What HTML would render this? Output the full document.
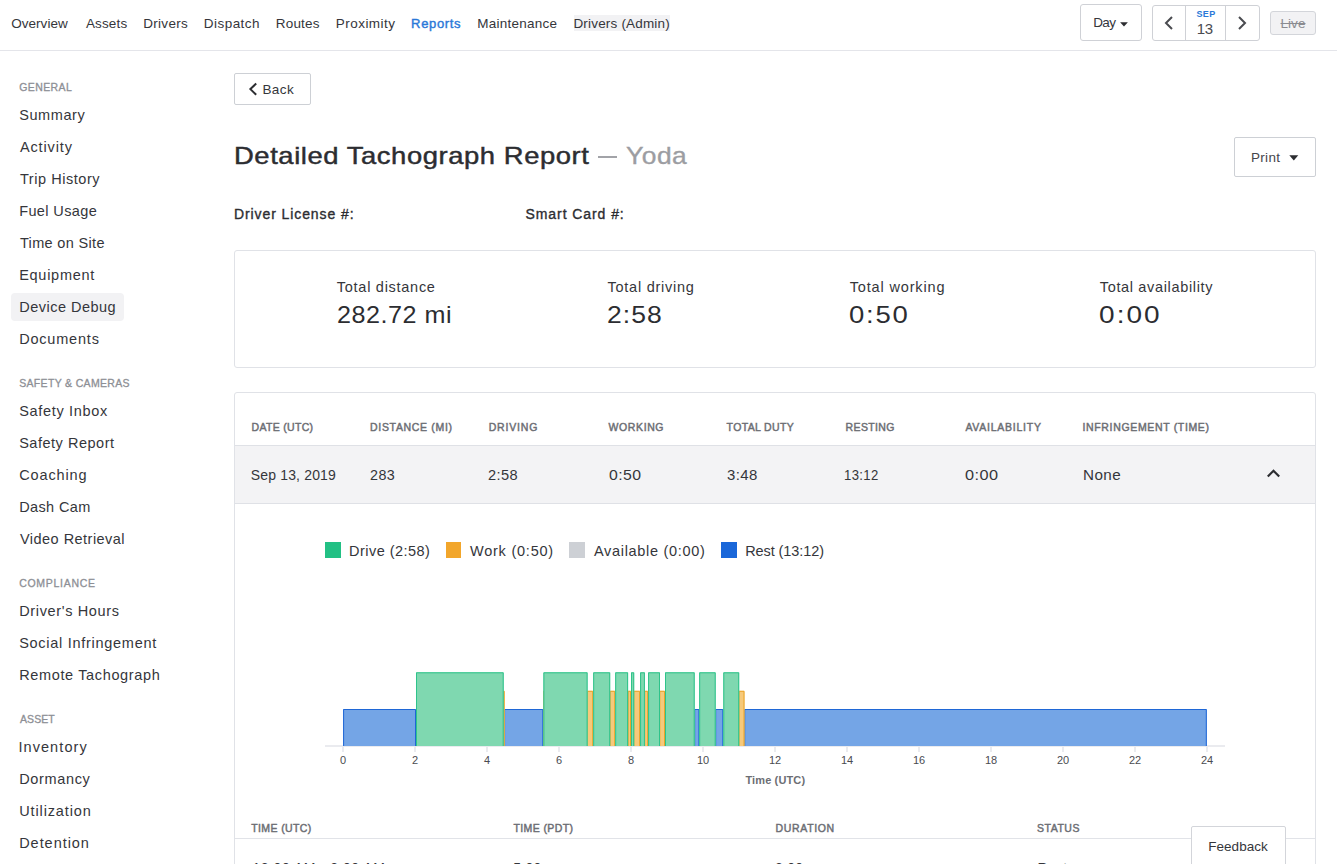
<!DOCTYPE html>
<html><head><meta charset="utf-8"><title>Detailed Tachograph Report</title>
<style>
html,body{margin:0;padding:0;background:#fff;}
body{width:1337px;height:864px;overflow:hidden;position:relative;font-family:"Liberation Sans",sans-serif;}
.t{position:absolute;white-space:nowrap;line-height:1;}
.r{position:absolute;}
</style></head><body>
<div class="r" style="left:0px;top:50px;width:1337px;height:1px;background:#e4e5ea;"></div>
<div class="r" style="left:574px;top:15px;width:96px;height:16px;background:#f2f2f4;"></div>
<div class="t" style="left:11.24px;top:16.57px;font-size:13.5px;color:#35363b;letter-spacing:0.029px;">Overview</div>
<div class="t" style="left:85.90px;top:16.57px;font-size:13.5px;color:#35363b;letter-spacing:0.152px;">Assets</div>
<div class="t" style="left:143.30px;top:16.57px;font-size:13.5px;color:#35363b;letter-spacing:0.275px;">Drivers</div>
<div class="t" style="left:203.82px;top:16.57px;font-size:13.5px;color:#35363b;letter-spacing:0.453px;">Dispatch</div>
<div class="t" style="left:275.82px;top:16.57px;font-size:13.5px;color:#35363b;letter-spacing:0.170px;">Routes</div>
<div class="t" style="left:335.82px;top:16.57px;font-size:13.5px;color:#35363b;letter-spacing:0.453px;">Proximity</div>
<div class="t" style="left:477.20px;top:16.57px;font-size:13.5px;color:#35363b;letter-spacing:0.260px;">Maintenance</div>
<div class="t" style="left:573.44px;top:16.57px;font-size:13.5px;color:#35363b;letter-spacing:0.182px;">Drivers (Admin)</div>
<div class="t" style="left:411.10px;top:16.99px;font-size:13px;color:#2a78d8;letter-spacing:0.650px;-webkit-text-stroke:0.4px #2a78d8;">Reports</div>
<div class="r" style="left:1080px;top:4px;width:62px;height:37px;border:1px solid #cfd1d6;border-radius:3px;box-sizing:border-box;background:#fff;"></div>
<div class="t" style="left:1093.20px;top:16.47px;font-size:13.5px;color:#35363b;letter-spacing:-0.625px;">Day</div>
<svg class="r" style="left:1120px;top:21.6px" width="9" height="6"><path d="M0.1 0.3 L7.9 0.3 L4 4.4 Z" fill="#2c2d31"/></svg>
<div class="r" style="left:1152px;top:5px;width:108px;height:36px;border:1px solid #cfd1d6;border-radius:3px;box-sizing:border-box;background:#fff;"></div>
<div class="r" style="left:1185px;top:5px;width:1px;height:36px;background:#cfd1d6;"></div>
<div class="r" style="left:1225px;top:5px;width:1px;height:36px;background:#cfd1d6;"></div>
<svg class="r" style="left:1162px;top:15px" width="13" height="16"><path d="M10 2 L4 8 L10 14" fill="none" stroke="#4a4b50" stroke-width="2"/></svg>
<svg class="r" style="left:1236px;top:15px" width="13" height="16"><path d="M3 2 L9 8 L3 14" fill="none" stroke="#4a4b50" stroke-width="2"/></svg>
<div class="t" style="left:1196.42px;top:9.58px;font-size:9px;color:#2a78d8;font-weight:700;letter-spacing:0.415px;">SEP</div>
<div class="t" style="left:1196.68px;top:21.30px;font-size:15px;color:#4a4b50;letter-spacing:-0.240px;">13</div>
<div class="r" style="left:1270px;top:11px;width:46px;height:24px;border:1px solid #d3d5da;border-radius:3px;box-sizing:border-box;background:#f2f2f4;"></div>
<div class="t" style="left:1280.50px;top:16.57px;font-size:13.5px;color:#8a8b90;letter-spacing:0.050px;text-decoration:line-through;">Live</div>
<div class="r" style="left:11px;top:293px;width:113px;height:28px;background:#f2f2f4;border-radius:4px;"></div>
<div class="t" style="left:19.18px;top:82.21px;font-size:10.5px;color:#8d8f95;letter-spacing:0.405px;-webkit-text-stroke:0.3px #8d8f95;">GENERAL</div>
<div class="t" style="left:19.18px;top:107.82px;font-size:14.5px;color:#35363b;letter-spacing:0.590px;">Summary</div>
<div class="t" style="left:19.98px;top:139.82px;font-size:14.5px;color:#35363b;letter-spacing:0.859px;">Activity</div>
<div class="t" style="left:19.98px;top:171.82px;font-size:14.5px;color:#35363b;letter-spacing:0.541px;">Trip History</div>
<div class="t" style="left:19.18px;top:203.82px;font-size:14.5px;color:#35363b;letter-spacing:0.380px;">Fuel Usage</div>
<div class="t" style="left:19.98px;top:235.82px;font-size:14.5px;color:#35363b;letter-spacing:0.329px;">Time on Site</div>
<div class="t" style="left:19.18px;top:267.82px;font-size:14.5px;color:#35363b;letter-spacing:0.725px;">Equipment</div>
<div class="t" style="left:19.18px;top:299.82px;font-size:14.5px;color:#35363b;letter-spacing:0.493px;">Device Debug</div>
<div class="t" style="left:19.18px;top:331.82px;font-size:14.5px;color:#35363b;letter-spacing:0.802px;">Documents</div>
<div class="t" style="left:19.18px;top:378.21px;font-size:10.5px;color:#8d8f95;letter-spacing:0.330px;-webkit-text-stroke:0.3px #8d8f95;">SAFETY &amp; CAMERAS</div>
<div class="t" style="left:19.18px;top:403.82px;font-size:14.5px;color:#35363b;letter-spacing:0.680px;">Safety Inbox</div>
<div class="t" style="left:19.18px;top:435.82px;font-size:14.5px;color:#35363b;letter-spacing:0.515px;">Safety Report</div>
<div class="t" style="left:19.18px;top:467.82px;font-size:14.5px;color:#35363b;letter-spacing:0.886px;">Coaching</div>
<div class="t" style="left:19.18px;top:499.82px;font-size:14.5px;color:#35363b;letter-spacing:0.371px;">Dash Cam</div>
<div class="t" style="left:19.98px;top:531.82px;font-size:14.5px;color:#35363b;letter-spacing:0.468px;">Video Retrieval</div>
<div class="t" style="left:19.18px;top:578.21px;font-size:10.5px;color:#8d8f95;letter-spacing:0.710px;-webkit-text-stroke:0.3px #8d8f95;">COMPLIANCE</div>
<div class="t" style="left:19.18px;top:603.82px;font-size:14.5px;color:#35363b;letter-spacing:0.646px;">Driver's Hours</div>
<div class="t" style="left:19.18px;top:635.82px;font-size:14.5px;color:#35363b;letter-spacing:0.720px;">Social Infringement</div>
<div class="t" style="left:19.18px;top:667.82px;font-size:14.5px;color:#35363b;letter-spacing:0.640px;">Remote Tachograph</div>
<div class="t" style="left:19.98px;top:714.21px;font-size:10.5px;color:#8d8f95;letter-spacing:0.075px;-webkit-text-stroke:0.3px #8d8f95;">ASSET</div>
<div class="t" style="left:18.38px;top:739.82px;font-size:14.5px;color:#35363b;letter-spacing:1.085px;">Inventory</div>
<div class="t" style="left:19.18px;top:771.82px;font-size:14.5px;color:#35363b;letter-spacing:0.654px;">Dormancy</div>
<div class="t" style="left:19.18px;top:803.82px;font-size:14.5px;color:#35363b;letter-spacing:0.878px;">Utilization</div>
<div class="t" style="left:19.18px;top:835.82px;font-size:14.5px;color:#35363b;letter-spacing:0.960px;">Detention</div>
<div class="r" style="left:234px;top:73px;width:77px;height:32px;border:1px solid #cdd0d5;border-radius:2px;box-sizing:border-box;"></div>
<svg class="r" style="left:247px;top:82px" width="11" height="14"><path d="M9.2 1.6 L3.4 7.1 L9.2 12.8" fill="none" stroke="#2c2d31" stroke-width="2"/></svg>
<div class="t" style="left:262.44px;top:82.97px;font-size:13.5px;color:#35363b;letter-spacing:0.430px;">Back</div>
<div class="t" style="left:233.52px;top:144.48px;font-size:24px;color:#2c2d31;letter-spacing:0.500px;-webkit-text-stroke:0.45px #2c2d31;transform:scaleX(1.1414);transform-origin:0 0;">Detailed Tachograph Report</div>
<div class="r" style="left:598px;top:156.4px;width:18.6px;height:2px;background:#a2a3a8;"></div>
<div class="t" style="left:625.50px;top:144.48px;font-size:24px;color:#9c9da2;letter-spacing:0.500px;-webkit-text-stroke:0.35px #9c9da2;transform:scaleX(1.0982);transform-origin:0 0;">Yoda</div>
<div class="t" style="left:233.92px;top:206.75px;font-size:14px;color:#2c2d31;letter-spacing:0.912px;-webkit-text-stroke:0.35px #2c2d31;">Driver License #:</div>
<div class="t" style="left:525.50px;top:206.75px;font-size:14px;color:#2c2d31;letter-spacing:0.925px;-webkit-text-stroke:0.35px #2c2d31;">Smart Card #:</div>
<div class="r" style="left:1234px;top:137px;width:82px;height:40px;border:1px solid #cdd0d5;border-radius:2px;box-sizing:border-box;"></div>
<div class="t" style="left:1250.96px;top:151.27px;font-size:13.5px;color:#45464b;letter-spacing:0.335px;">Print</div>
<svg class="r" style="left:1289px;top:154.5px" width="10" height="6"><path d="M0.3 0.3 L9.3 0.3 L4.8 5.5 Z" fill="#2c2d31"/></svg>
<div class="r" style="left:234px;top:250px;width:1082px;height:118px;border:1px solid #e0e2e7;border-radius:3px;box-sizing:border-box;"></div>
<div class="t" style="left:336.86px;top:279.72px;font-size:14.5px;color:#35363b;letter-spacing:0.723px;">Total distance</div>
<div class="t" style="left:336.70px;top:302.86px;font-size:24.5px;color:#2c2d31;letter-spacing:0.500px;transform:scaleX(1.0265);transform-origin:0 0;">282.72 mi</div>
<div class="t" style="left:607.48px;top:279.72px;font-size:14.5px;color:#35363b;letter-spacing:0.753px;">Total driving</div>
<div class="t" style="left:606.52px;top:302.86px;font-size:24.5px;color:#2c2d31;letter-spacing:1.000px;transform:scaleX(1.0816);transform-origin:0 0;">2:58</div>
<div class="t" style="left:849.76px;top:279.72px;font-size:14.5px;color:#35363b;letter-spacing:0.843px;">Total working</div>
<div class="t" style="left:848.64px;top:302.86px;font-size:24.5px;color:#2c2d31;letter-spacing:1.600px;transform:scaleX(1.1224);transform-origin:0 0;">0:50</div>
<div class="t" style="left:1099.76px;top:279.72px;font-size:14.5px;color:#35363b;letter-spacing:0.656px;">Total availability</div>
<div class="t" style="left:1098.64px;top:302.86px;font-size:24.5px;color:#2c2d31;letter-spacing:1.800px;transform:scaleX(1.1428);transform-origin:0 0;">0:00</div>
<div class="r" style="left:234px;top:392px;width:1082px;height:600px;border:1px solid #e0e2e7;border-radius:3px;box-sizing:border-box;"></div>
<div class="r" style="left:235px;top:445px;width:1080px;height:1px;background:#dfe1e6;"></div>
<div class="r" style="left:235px;top:446px;width:1080px;height:57px;background:#f3f3f5;"></div>
<div class="r" style="left:235px;top:503px;width:1080px;height:1px;background:#dfe1e6;"></div>
<div class="t" style="left:251.62px;top:422.11px;font-size:10.5px;color:#6c6e74;letter-spacing:0.300px;-webkit-text-stroke:0.45px #6c6e74;">DATE (UTC)</div>
<div class="t" style="left:250.82px;top:468.05px;font-size:14px;color:#35363b;letter-spacing:0.155px;">Sep 13, 2019</div>
<div class="t" style="left:370.10px;top:422.11px;font-size:10.5px;color:#6c6e74;letter-spacing:0.667px;-webkit-text-stroke:0.45px #6c6e74;">DISTANCE (MI)</div>
<div class="t" style="left:370.00px;top:468.05px;font-size:14px;color:#35363b;letter-spacing:0.400px;transform:scaleX(1.0239);transform-origin:0 0;">283</div>
<div class="t" style="left:488.72px;top:422.11px;font-size:10.5px;color:#6c6e74;letter-spacing:0.810px;-webkit-text-stroke:0.45px #6c6e74;">DRIVING</div>
<div class="t" style="left:488.48px;top:468.05px;font-size:14px;color:#35363b;letter-spacing:0.400px;transform:scaleX(1.0428);transform-origin:0 0;">2:58</div>
<div class="t" style="left:608.52px;top:422.11px;font-size:10.5px;color:#6c6e74;letter-spacing:0.615px;-webkit-text-stroke:0.45px #6c6e74;">WORKING</div>
<div class="t" style="left:608.52px;top:468.05px;font-size:14px;color:#35363b;letter-spacing:0.400px;transform:scaleX(1.1286);transform-origin:0 0;">0:50</div>
<div class="t" style="left:726.62px;top:422.11px;font-size:10.5px;color:#6c6e74;letter-spacing:0.350px;-webkit-text-stroke:0.45px #6c6e74;">TOTAL DUTY</div>
<div class="t" style="left:726.62px;top:468.05px;font-size:14px;color:#35363b;letter-spacing:0.400px;transform:scaleX(1.0680);transform-origin:0 0;">3:48</div>
<div class="t" style="left:845.62px;top:422.11px;font-size:10.5px;color:#6c6e74;letter-spacing:0.360px;-webkit-text-stroke:0.45px #6c6e74;">RESTING</div>
<div class="t" style="left:843.92px;top:468.05px;font-size:14px;color:#35363b;letter-spacing:0.400px;transform:scaleX(0.9367);transform-origin:0 0;">13:12</div>
<div class="t" style="left:965.42px;top:422.11px;font-size:10.5px;color:#6c6e74;letter-spacing:0.744px;-webkit-text-stroke:0.45px #6c6e74;">AVAILABILITY</div>
<div class="t" style="left:964.76px;top:468.05px;font-size:14px;color:#35363b;letter-spacing:0.400px;transform:scaleX(1.1643);transform-origin:0 0;">0:00</div>
<div class="t" style="left:1082.44px;top:422.11px;font-size:10.5px;color:#6c6e74;letter-spacing:0.660px;-webkit-text-stroke:0.45px #6c6e74;">INFRINGEMENT (TIME)</div>
<div class="t" style="left:1082.58px;top:468.05px;font-size:14px;color:#35363b;letter-spacing:0.400px;transform:scaleX(1.0876);transform-origin:0 0;">None</div>
<svg class="r" style="left:1265.5px;top:464.8px" width="16" height="14"><path d="M1.8 11.5 L7.5 5.8 L13.2 11.5" fill="none" stroke="#2c2d31" stroke-width="2.2"/></svg>
<div class="r" style="left:325px;top:542.2px;width:15.6px;height:15.5px;background:#22c084;"></div>
<div class="t" style="left:349.06px;top:543.72px;font-size:14.5px;color:#35363b;letter-spacing:0.464px;">Drive (2:58)</div>
<div class="r" style="left:445.8px;top:542.2px;width:15.6px;height:15.5px;background:#f2a62b;"></div>
<div class="t" style="left:470.00px;top:543.72px;font-size:14.5px;color:#35363b;letter-spacing:0.768px;">Work (0:50)</div>
<div class="r" style="left:569px;top:542.2px;width:15.6px;height:15.5px;background:#cdd0d5;"></div>
<div class="t" style="left:594.00px;top:543.72px;font-size:14.5px;color:#35363b;letter-spacing:0.684px;">Available (0:00)</div>
<div class="r" style="left:721px;top:542.2px;width:15.6px;height:15.5px;background:#1a67d9;"></div>
<div class="t" style="left:745.20px;top:543.72px;font-size:14.5px;color:#35363b;letter-spacing:-0.092px;">Rest (13:12)</div>
<div class="r" style="left:325px;top:745px;width:900px;height:2px;background:#eaebef;"></div>
<div class="r" style="left:342.0px;top:747px;width:2px;height:5px;background:#eaebef;"></div>
<div class="t" style="left:343.00px;top:754.69px;font-size:11px;color:#4a4b50;transform:translateX(-50%);">0</div>
<div class="r" style="left:414.0px;top:747px;width:2px;height:5px;background:#eaebef;"></div>
<div class="t" style="left:415.00px;top:754.69px;font-size:11px;color:#4a4b50;transform:translateX(-50%);">2</div>
<div class="r" style="left:486.0px;top:747px;width:2px;height:5px;background:#eaebef;"></div>
<div class="t" style="left:487.00px;top:754.69px;font-size:11px;color:#4a4b50;transform:translateX(-50%);">4</div>
<div class="r" style="left:558.0px;top:747px;width:2px;height:5px;background:#eaebef;"></div>
<div class="t" style="left:559.00px;top:754.69px;font-size:11px;color:#4a4b50;transform:translateX(-50%);">6</div>
<div class="r" style="left:630.0px;top:747px;width:2px;height:5px;background:#eaebef;"></div>
<div class="t" style="left:631.00px;top:754.69px;font-size:11px;color:#4a4b50;transform:translateX(-50%);">8</div>
<div class="r" style="left:702.0px;top:747px;width:2px;height:5px;background:#eaebef;"></div>
<div class="t" style="left:703.00px;top:754.69px;font-size:11px;color:#4a4b50;transform:translateX(-50%);">10</div>
<div class="r" style="left:774.0px;top:747px;width:2px;height:5px;background:#eaebef;"></div>
<div class="t" style="left:775.00px;top:754.69px;font-size:11px;color:#4a4b50;transform:translateX(-50%);">12</div>
<div class="r" style="left:846.0px;top:747px;width:2px;height:5px;background:#eaebef;"></div>
<div class="t" style="left:847.00px;top:754.69px;font-size:11px;color:#4a4b50;transform:translateX(-50%);">14</div>
<div class="r" style="left:918.0px;top:747px;width:2px;height:5px;background:#eaebef;"></div>
<div class="t" style="left:919.00px;top:754.69px;font-size:11px;color:#4a4b50;transform:translateX(-50%);">16</div>
<div class="r" style="left:990.0px;top:747px;width:2px;height:5px;background:#eaebef;"></div>
<div class="t" style="left:991.00px;top:754.69px;font-size:11px;color:#4a4b50;transform:translateX(-50%);">18</div>
<div class="r" style="left:1062.0px;top:747px;width:2px;height:5px;background:#eaebef;"></div>
<div class="t" style="left:1063.00px;top:754.69px;font-size:11px;color:#4a4b50;transform:translateX(-50%);">20</div>
<div class="r" style="left:1134.0px;top:747px;width:2px;height:5px;background:#eaebef;"></div>
<div class="t" style="left:1135.00px;top:754.69px;font-size:11px;color:#4a4b50;transform:translateX(-50%);">22</div>
<div class="r" style="left:1206.0px;top:747px;width:2px;height:5px;background:#eaebef;"></div>
<div class="t" style="left:1207.00px;top:754.69px;font-size:11px;color:#4a4b50;transform:translateX(-50%);">24</div>
<div class="t" style="left:745.38px;top:774.89px;font-size:11px;color:#6c6e74;font-weight:700;letter-spacing:0.140px;">Time (UTC)</div>
<svg class="r" style="left:0;top:0" width="1337" height="864">
<rect x="343.10" y="709.00" width="72.90" height="37.00" fill="#74a5e6"/>
<path d="M343.60 746 V709.50 H415.50 V746" fill="none" stroke="#1f67d6" stroke-width="1"/>
<rect x="504.10" y="709.00" width="39.20" height="37.00" fill="#74a5e6"/>
<path d="M504.60 746 V709.50 H542.80 V746" fill="none" stroke="#1f67d6" stroke-width="1"/>
<rect x="694.20" y="709.00" width="5.20" height="37.00" fill="#74a5e6"/>
<path d="M694.70 746 V709.50 H698.90 V746" fill="none" stroke="#1f67d6" stroke-width="1"/>
<rect x="715.20" y="709.00" width="8.10" height="37.00" fill="#74a5e6"/>
<path d="M715.70 746 V709.50 H722.80 V746" fill="none" stroke="#1f67d6" stroke-width="1"/>
<rect x="744.20" y="709.00" width="462.60" height="37.00" fill="#74a5e6"/>
<path d="M744.70 746 V709.50 H1206.30 V746" fill="none" stroke="#1f67d6" stroke-width="1"/>
<rect x="502.80" y="690.80" width="1.90" height="55.20" fill="#f6c97b"/>
<path d="M503.30 746 V691.30 H504.20 V746" fill="none" stroke="#eaa42a" stroke-width="1"/>
<rect x="543.00" y="690.80" width="1.50" height="55.20" fill="#f6c97b"/>
<path d="M543.50 746 V691.30 H544.00 V746" fill="none" stroke="#eaa42a" stroke-width="1"/>
<rect x="587.00" y="690.80" width="6.20" height="55.20" fill="#f6c97b"/>
<path d="M587.50 746 V691.30 H592.70 V746" fill="none" stroke="#eaa42a" stroke-width="1"/>
<rect x="609.70" y="690.80" width="5.50" height="55.20" fill="#f6c97b"/>
<path d="M610.20 746 V691.30 H614.70 V746" fill="none" stroke="#eaa42a" stroke-width="1"/>
<rect x="627.70" y="690.80" width="3.30" height="55.20" fill="#f6c97b"/>
<path d="M628.20 746 V691.30 H630.50 V746" fill="none" stroke="#eaa42a" stroke-width="1"/>
<rect x="633.40" y="690.80" width="6.70" height="55.20" fill="#f6c97b"/>
<path d="M633.90 746 V691.30 H639.60 V746" fill="none" stroke="#eaa42a" stroke-width="1"/>
<rect x="644.20" y="690.80" width="3.90" height="55.20" fill="#f6c97b"/>
<path d="M644.70 746 V691.30 H647.60 V746" fill="none" stroke="#eaa42a" stroke-width="1"/>
<rect x="659.30" y="690.80" width="5.70" height="55.20" fill="#f6c97b"/>
<path d="M659.80 746 V691.30 H664.50 V746" fill="none" stroke="#eaa42a" stroke-width="1"/>
<rect x="738.60" y="690.80" width="5.90" height="55.20" fill="#f6c97b"/>
<path d="M739.10 746 V691.30 H744.00 V746" fill="none" stroke="#eaa42a" stroke-width="1"/>
<rect x="416.00" y="672.30" width="87.70" height="73.70" fill="#7fd8b0"/>
<path d="M416.50 746 V672.80 H503.20 V746" fill="none" stroke="#2ec38b" stroke-width="1"/>
<rect x="543.40" y="672.30" width="44.20" height="73.70" fill="#7fd8b0"/>
<path d="M543.90 746 V672.80 H587.10 V746" fill="none" stroke="#2ec38b" stroke-width="1"/>
<rect x="593.20" y="672.30" width="17.00" height="73.70" fill="#7fd8b0"/>
<path d="M593.70 746 V672.80 H609.70 V746" fill="none" stroke="#2ec38b" stroke-width="1"/>
<rect x="615.20" y="672.30" width="12.90" height="73.70" fill="#7fd8b0"/>
<path d="M615.70 746 V672.80 H627.60 V746" fill="none" stroke="#2ec38b" stroke-width="1"/>
<rect x="631.00" y="672.30" width="3.20" height="73.70" fill="#7fd8b0"/>
<path d="M631.50 746 V672.80 H633.70 V746" fill="none" stroke="#2ec38b" stroke-width="1"/>
<rect x="640.10" y="672.30" width="4.80" height="73.70" fill="#7fd8b0"/>
<path d="M640.60 746 V672.80 H644.40 V746" fill="none" stroke="#2ec38b" stroke-width="1"/>
<rect x="648.10" y="672.30" width="11.90" height="73.70" fill="#7fd8b0"/>
<path d="M648.60 746 V672.80 H659.50 V746" fill="none" stroke="#2ec38b" stroke-width="1"/>
<rect x="665.00" y="672.30" width="29.70" height="73.70" fill="#7fd8b0"/>
<path d="M665.50 746 V672.80 H694.20 V746" fill="none" stroke="#2ec38b" stroke-width="1"/>
<rect x="699.20" y="672.30" width="16.50" height="73.70" fill="#7fd8b0"/>
<path d="M699.70 746 V672.80 H715.20 V746" fill="none" stroke="#2ec38b" stroke-width="1"/>
<rect x="723.30" y="672.30" width="15.90" height="73.70" fill="#7fd8b0"/>
<path d="M723.80 746 V672.80 H738.70 V746" fill="none" stroke="#2ec38b" stroke-width="1"/>
</svg>
<div class="t" style="left:251.24px;top:823.11px;font-size:10.5px;color:#6c6e74;letter-spacing:0.380px;-webkit-text-stroke:0.45px #6c6e74;">TIME (UTC)</div>
<div class="t" style="left:513.52px;top:823.11px;font-size:10.5px;color:#6c6e74;letter-spacing:0.380px;-webkit-text-stroke:0.45px #6c6e74;">TIME (PDT)</div>
<div class="t" style="left:775.62px;top:823.11px;font-size:10.5px;color:#6c6e74;letter-spacing:0.643px;-webkit-text-stroke:0.45px #6c6e74;">DURATION</div>
<div class="t" style="left:1037.10px;top:823.11px;font-size:10.5px;color:#6c6e74;letter-spacing:0.486px;-webkit-text-stroke:0.45px #6c6e74;">STATUS</div>
<div class="r" style="left:235px;top:838px;width:1080px;height:1px;background:#e1e3e8;"></div>
<div class="t" style="left:252.50px;top:861.15px;font-size:14px;color:#35363b;letter-spacing:0.550px;">12:00 AM - 2:00 AM</div>
<div class="t" style="left:513.20px;top:861.15px;font-size:14px;color:#35363b;letter-spacing:0.300px;">5:00</div>
<div class="t" style="left:775.00px;top:861.15px;font-size:14px;color:#35363b;letter-spacing:0.300px;">2:00</div>
<div class="t" style="left:1037.50px;top:861.15px;font-size:14px;color:#35363b;letter-spacing:0.300px;">Rest</div>
<div class="r" style="left:1191px;top:826px;width:95px;height:60px;border:1px solid #d3d5da;border-radius:2px;box-sizing:border-box;background:#fff;"></div>
<div class="t" style="left:1208.20px;top:840.17px;font-size:13.5px;color:#35363b;letter-spacing:0.052px;">Feedback</div>
</body></html>
